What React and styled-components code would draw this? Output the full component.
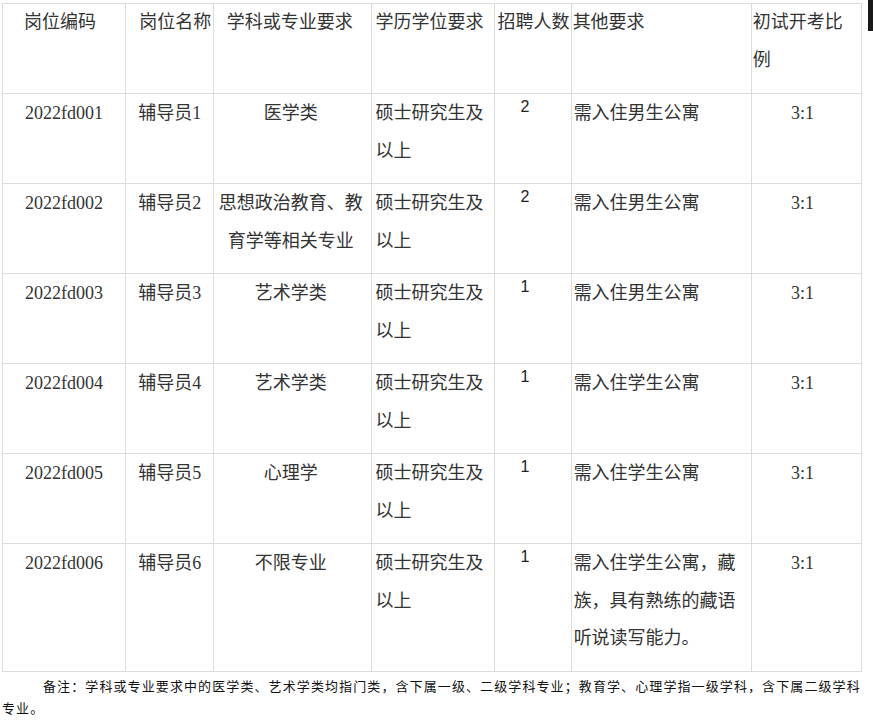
import React from "react";
import styled, { createGlobalStyle } from "styled-components";

const GlobalStyle = createGlobalStyle`
  html, body {
    margin: 0;
    padding: 0;
    background: #fff;
  }
  body {
    font-family: "Liberation Serif", "Noto Sans CJK SC", serif;
    color: #333;
  }
`;

const Page = styled.div`
  position: relative;
  width: 873px;
  height: 721px;
  overflow: hidden;
  padding: 3px 0 0 2px;
  box-sizing: border-box;
`;

const ScrollThumb = styled.div`
  position: absolute;
  top: 0;
  right: 0;
  width: 5px;
  height: 31px;
  background: #1a1a1a;
`;

const Table = styled.table`
  width: 860px;
  border-collapse: collapse;
  table-layout: fixed;
  font-size: 18px;
`;

const Cell = styled.td`
  border: 1px solid #dcdcdc;
  vertical-align: top;
  line-height: 37.5px;
  padding: ${(p) => p.$pad || "1px 3px 13px 3px"};
  text-align: ${(p) => p.$align || "left"};
  word-break: break-all;
`;

const HeadCell = styled(Cell).attrs({ as: "th" })`
  font-weight: normal;
  padding: ${(p) => p.$pad || "0 3px 14px 3px"};
`;

const Count = styled.span`
  display: block;
  font-family: "Liberation Sans", "Noto Sans CJK SC", sans-serif;
  font-size: 16px;
  line-height: 24px;
  color: #222;
  padding-left: 23px;
`;

const Note = styled.p`
  width: 860px;
  margin: 3px 0 0 0;
  font-family: "Noto Sans CJK SC", sans-serif;
  font-size: 13px;
  letter-spacing: 1.1px;
  line-height: 22px;
  text-indent: 41px;
  color: #111;
  word-break: break-all;
`;

const cols = [123, 88, 158, 122, 77, 180, 110];

const rows = [
  ["2022fd001", "辅导员1", "医学类", "2", "需入住男生公寓"],
  ["2022fd002", "辅导员2", "思想政治教育、教育学等相关专业", "2", "需入住男生公寓"],
  ["2022fd003", "辅导员3", "艺术学类", "1", "需入住男生公寓"],
  ["2022fd004", "辅导员4", "艺术学类", "1", "需入住学生公寓"],
  ["2022fd005", "辅导员5", "心理学", "1", "需入住学生公寓"],
  ["2022fd006", "辅导员6", "不限专业", "1", "需入住学生公寓，藏族，具有熟练的藏语听说读写能力。"],
];

export default function App() {
  return (
    <>
      <GlobalStyle />
      <Page>
        <ScrollThumb />
        <Table>
          <colgroup>
            {cols.map((w, i) => (
              <col key={i} style={{ width: w }} />
            ))}
          </colgroup>
          <thead>
            <tr>
              <HeadCell $align="center" $pad="0 8px 14px 0">岗位编码</HeadCell>
              <HeadCell $pad="0 0 14px 13px">岗位名称</HeadCell>
              <HeadCell $align="center" $pad="0 6px 14px 0">学科或专业要求</HeadCell>
              <HeadCell>学历学位要求</HeadCell>
              <HeadCell $pad="0 0 14px 3px">招聘人数</HeadCell>
              <HeadCell $pad="0 4px 14px 1px">其他要求</HeadCell>
              <HeadCell $pad="0 4px 14px 1px">初试开考比例</HeadCell>
            </tr>
          </thead>
          <tbody>
            {rows.map(([code, name, major, count, other]) => (
              <tr key={code}>
                <Cell $align="center">{code}</Cell>
                <Cell $align="center" $pad="1px 0 13px 0">{name}</Cell>
                <Cell $align="center" $pad="1px 6px 13px 2px">{major}</Cell>
                <Cell>硕士研究生及以上</Cell>
                <Cell $pad="1px 0 13px 3px">
                  <Count>{count}</Count>
                </Cell>
                <Cell $pad="1px 8px 13px 2px">{other}</Cell>
                <Cell $align="center" $pad="1px 8px 13px 0">3:1</Cell>
              </tr>
            ))}
          </tbody>
        </Table>
        <Note>
          备注：学科或专业要求中的医学类、艺术学类均指门类，含下属一级、二级学科专业；教育学、心理学指一级学科，含下属二级学科专业。
        </Note>
      </Page>
    </>
  );
}
